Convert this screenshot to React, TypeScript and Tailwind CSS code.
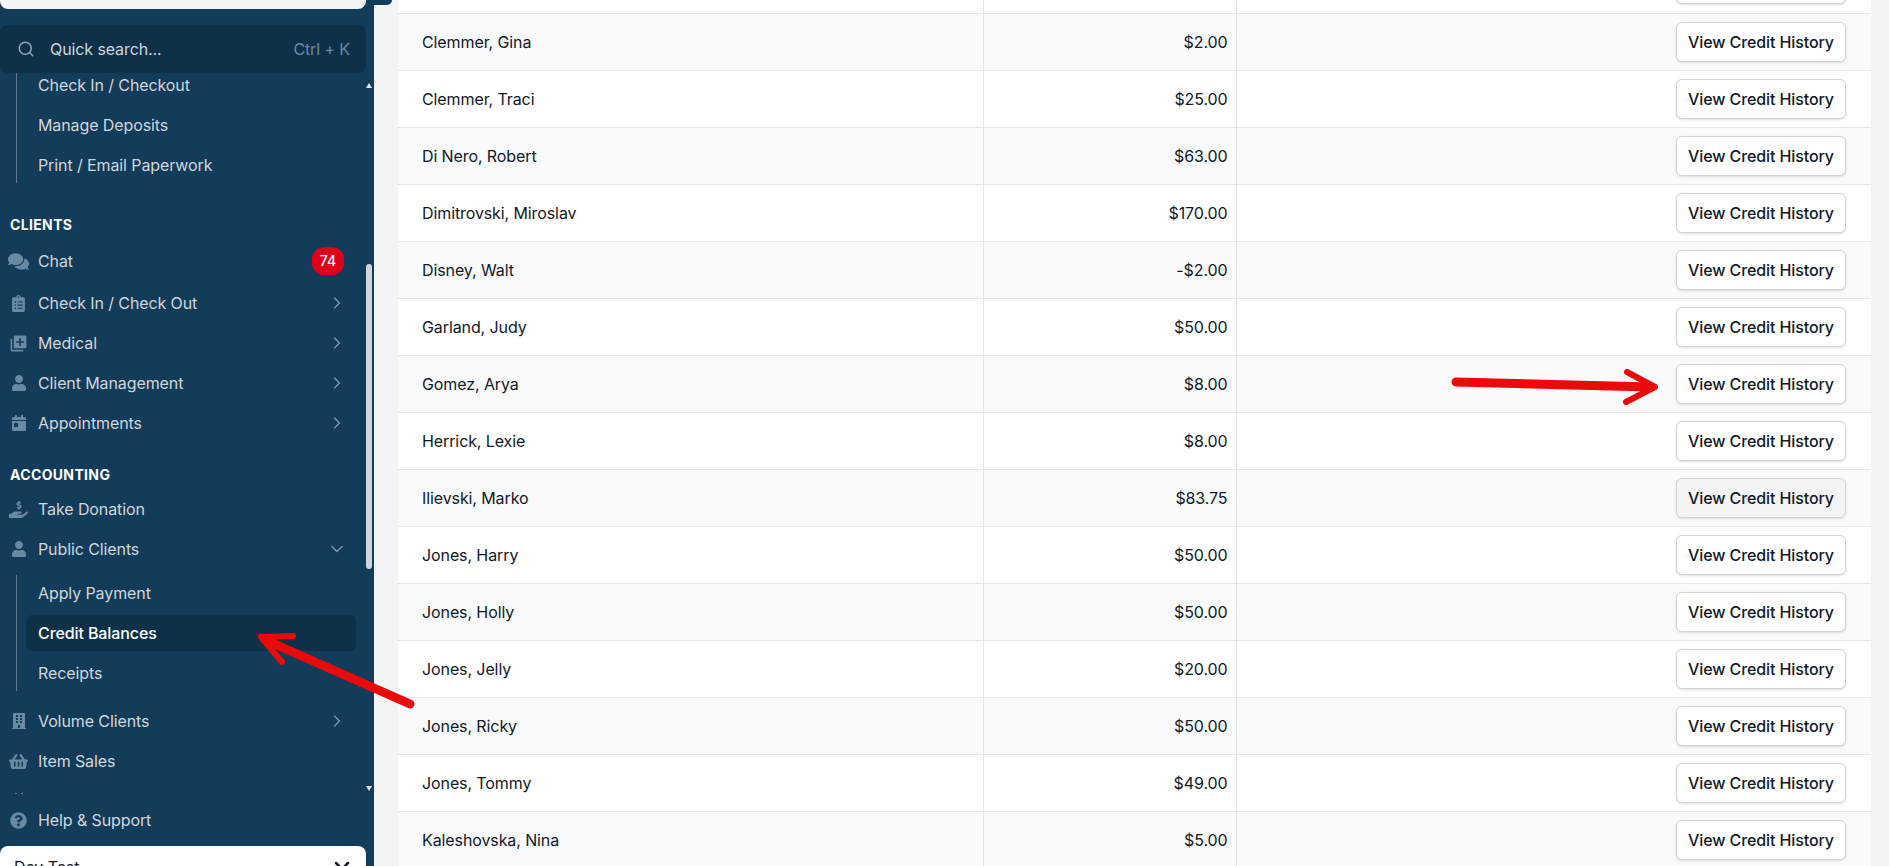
import React from "react";
import { ChevronDown, ChevronRight, Search } from "lucide-react";
import {
  FaBuilding,
  FaCalendarAlt,
  FaCalendarDay,
  FaClipboardList,
  FaComments,
  FaHandHoldingUsd,
  FaQuestionCircle,
  FaShoppingBasket,
  FaUser,
} from "react-icons/fa";
import { MdLibraryAdd } from "react-icons/md";

type Row = { name: string; amount: string; hover?: boolean };

const rows: Row[] = [
  { name: "", amount: "" },
  { name: "Clemmer, Gina", amount: "$2.00" },
  { name: "Clemmer, Traci", amount: "$25.00" },
  { name: "Di Nero, Robert", amount: "$63.00" },
  { name: "Dimitrovski, Miroslav", amount: "$170.00" },
  { name: "Disney, Walt", amount: "-$2.00" },
  { name: "Garland, Judy", amount: "$50.00" },
  { name: "Gomez, Arya", amount: "$8.00" },
  { name: "Herrick, Lexie", amount: "$8.00" },
  { name: "Ilievski, Marko", amount: "$83.75", hover: true },
  { name: "Jones, Harry", amount: "$50.00" },
  { name: "Jones, Holly", amount: "$50.00" },
  { name: "Jones, Jelly", amount: "$20.00" },
  { name: "Jones, Ricky", amount: "$50.00" },
  { name: "Jones, Tommy", amount: "$49.00" },
  { name: "Kaleshovska, Nina", amount: "$5.00" },
];

const NavItem = ({
  icon,
  label,
  chevron,
  badge,
  className = "",
}: {
  icon: React.ReactNode;
  label: string;
  chevron?: "right" | "down";
  badge?: string;
  className?: string;
}) => (
  <div className={`flex items-center h-10 pr-[27px] ${className}`}>
    <span className="w-[38px] pr-px flex justify-center text-[#6a8aa3] shrink-0">{icon}</span>
    <span className="text-[#d1d5db] text-base tracking-[-0.1px]">{label}</span>
    {badge && (
      <span className="ml-auto mr-[3px] h-7 w-8 justify-center rounded-xl bg-[#e0001b] text-white text-sm font-medium flex items-center">
        {badge}
      </span>
    )}
    {chevron === "right" && <ChevronRight className="ml-auto text-[#7b94a9]" size={20} strokeWidth={1.8} />}
    {chevron === "down" && <ChevronDown className="ml-auto text-[#7b94a9]" size={20} strokeWidth={1.8} />}
  </div>
);

const SubList = ({ items, active, className = "" }: { items: string[]; active?: string; className?: string }) => (
  <div className={`ml-4 border-l border-[#5d7a91] pl-[9px] pr-[18px] flex flex-col gap-1 ${className}`}>
    {items.map((i) => (
      <div
        key={i}
        className={`h-9 flex items-center pl-3 rounded-md text-base tracking-[-0.1px] ${
          i === active ? "bg-[#0f3049] text-white font-medium" : "text-[#d1d5db]"
        }`}
      >
        {i}
      </div>
    ))}
  </div>
);

const Sidebar = () => (
  <aside className="w-[374px] shrink-0 h-full bg-[#123c5a] flex flex-col relative overflow-hidden">
    <div className="h-[9px] w-[366px] bg-[#f3f4f6] rounded-b-lg shrink-0" />
    <div className="mt-4 h-12 w-[366px] bg-[#0f3049] rounded-lg flex items-center pl-[17px] pr-4 shrink-0 z-10">
      <Search size={18} className="text-[#8fa5b6]" />
      <span className="ml-[15px] text-base tracking-[-0.1px] text-[#d1d5db]">Quick search...</span>
      <span className="ml-auto text-base tracking-[-0.1px] text-[#6a8aa3]">Ctrl + K</span>
    </div>
    <div className="flex-1 overflow-hidden">
      <div className="-mt-[6px]">
        <SubList items={["Check In / Checkout", "Manage Deposits", "Print / Email Paperwork"]} />
        <div className="mt-[30px] pl-[10px] h-6 flex items-center text-sm font-bold tracking-wide text-white">CLIENTS</div>
        <div className="mt-1">
          <NavItem icon={<FaComments size={21} />} label="Chat" badge="74" />
          <NavItem icon={<FaClipboardList size={17} />} label="Check In / Check Out" chevron="right" className="mt-[2px]" />
          <NavItem icon={<MdLibraryAdd size={19} />} label="Medical" chevron="right" />
          <NavItem icon={<FaUser size={16} />} label="Client Management" chevron="right" />
          <NavItem icon={<FaCalendarDay size={16} />} label="Appointments" chevron="right" />
        </div>
        <div className="mt-5 pl-[10px] h-6 flex items-center text-sm font-bold tracking-wide text-white">ACCOUNTING</div>
        <div className="mt-[2px]">
          <NavItem icon={<FaHandHoldingUsd size={19} />} label="Take Donation" />
          <NavItem icon={<FaUser size={16} />} label="Public Clients" chevron="down" />
        </div>
        <SubList className="mt-[6px]" items={["Apply Payment", "Credit Balances", "Receipts"]} active="Credit Balances" />
        <div className="mt-[10px]">
          <NavItem icon={<FaBuilding size={16} />} label="Volume Clients" chevron="right" />
          <NavItem icon={<FaShoppingBasket size={19} />} label="Item Sales" />
          {/* next row, only the top of its icon is visible */}
          <NavItem icon={<FaCalendarAlt size={16} />} label="" />
        </div>
      </div>
    </div>
    <div className="shrink-0 h-[52px] flex flex-col justify-center">
      <NavItem icon={<FaQuestionCircle size={17} />} label="Help & Support" />
    </div>
    <div className="h-[20px] w-[366px] bg-white rounded-t-lg shrink-0 flex items-start justify-between pl-[14px] pr-[12px] pt-2 overflow-hidden">
      <span className="text-base tracking-[-0.1px] text-[#111827] leading-5 mt-[3px]">Dev Test</span>
      <ChevronDown size={24} strokeWidth={2.5} className="text-[#111827]" />
    </div>
    {/* scrollbar */}
    <div className="absolute left-[366px] top-[264px] h-[305px] w-[6px] rounded bg-[#d1d5db]" />
    <div className="absolute left-[366px] top-[83px] w-0 h-0 border-x-[3px] border-x-transparent border-b-[5px] border-b-[#e5e7eb]" />
    <div className="absolute left-[366px] top-[786px] w-0 h-0 border-x-[3px] border-x-transparent border-t-[5px] border-t-[#e5e7eb]" />
  </aside>
);

const Table = () => (
  <div className="flex-1 bg-[#f3f4f6] pl-[24px] pr-[18px] overflow-hidden relative">
    <div className="absolute left-0 top-0 w-[18px] h-[5px] bg-[#123c5a] rounded-br-md" />
    <table className="w-full table-fixed border-collapse bg-white -mt-[44px]">
      <colgroup>
        <col className="w-[585px]" />
        <col className="w-[253px]" />
        <col />
      </colgroup>
      <tbody>
        {rows.map((r, i) => (
          <tr key={i} className={`h-[57px] border-b border-[#e5e7eb] ${i % 2 ? "bg-[#f9fafb]" : "bg-white"}`}>
            <td className="pl-6 text-base tracking-[-0.1px] text-[#111827] border-r border-[#e5e7eb]">{r.name}</td>
            <td className="pr-2 text-right text-base tracking-[-0.1px] text-[#111827] border-r border-[#e5e7eb]">{r.amount}</td>
            <td className="pr-[25px] text-right">
              <button
                className={`h-10 w-[170px] rounded-md border border-[#d1d5db] text-base tracking-[-0.1px] font-medium text-[#111827] shadow-sm align-middle ${
                  r.hover ? "bg-[#f3f4f6]" : "bg-white"
                }`}
              >
                View Credit History
              </button>
            </td>
          </tr>
        ))}
      </tbody>
    </table>
  </div>
);

const App = () => (
  <div className="h-screen w-full flex overflow-hidden font-['Inter',sans-serif]">
    <Sidebar />
    <Table />
    {/* annotation arrows drawn on the screenshot */}
    <svg className="absolute inset-0 pointer-events-none" width="1889" height="866" fill="none" stroke="#ea0a0a" strokeLinecap="round" strokeLinejoin="round">
      <path d="M1456 382 L1650 387" strokeWidth="9" />
      <path d="M1627 372 L1655 387 L1626 402" strokeWidth="6" />
      <path d="M410 704 L270 642" strokeWidth="9" />
      <path d="M293 636 L261 637 L282 662" strokeWidth="6" />
    </svg>
  </div>
);

export default App;
